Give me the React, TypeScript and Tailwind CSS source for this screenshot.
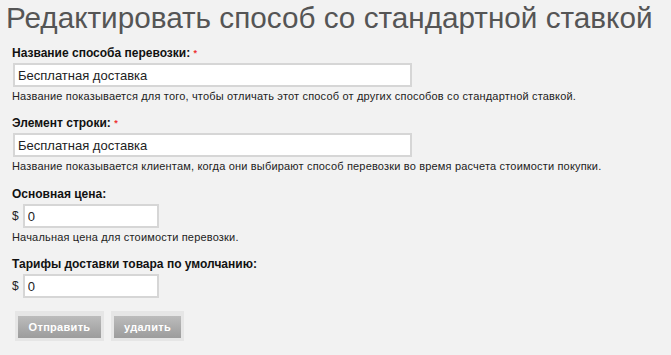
export default function App() {
  const label = "block text-[12px] font-bold leading-[14px] text-[#111]";
  const help = "text-[11px] leading-[13px] tracking-[0.18px] text-[#222]";
  const input =
    "h-[24px] border-2 border-[#d6d6d6] bg-white px-[3px] text-[13px] text-[#222] outline-none";

  return (
    <div className="min-h-screen bg-[#f2f2f2] pl-[12px] font-['Liberation_Sans',Arial,sans-serif]">
      <h1 className="-ml-[6px] pt-[1px] text-[29.7px] leading-[34px] font-normal text-[#555]">
        Редактировать способ со стандартной ставкой
      </h1>

      <div className="mt-[11px] flex flex-col">
        <label className={label}>
          Название способа перевозки: <span className="text-[#e33] text-[9px] align-top">*</span>
        </label>
        <input className={`${input} ml-[1px] mt-[3px] w-[399px]`} defaultValue="Бесплатная доставка" />
        <p className={`${help} mt-[3px]`}>
          Название показывается для того, чтобы отличать этот способ от других способов со стандартной ставкой.
        </p>

        <label className={`${label} mt-[13px]`}>
          Элемент строки: <span className="text-[#e33] text-[9px] align-top">*</span>
        </label>
        <input className={`${input} ml-[1px] mt-[3px] w-[399px]`} defaultValue="Бесплатная доставка" />
        <p className={`${help} mt-[3px]`}>
          Название показывается клиентам, когда они выбирают способ перевозки во время расчета стоимости покупки.
        </p>

        <label className={`${label} mt-[14px]`}>Основная цена:</label>
        <div className="mt-[3px] flex items-center gap-[4px]">
          <span className="text-[12px] text-[#222]">$</span>
          <input className={`${input} w-[136px]`} defaultValue="0" />
        </div>
        <p className={`${help} mt-[3px]`}>Начальная цена для стоимости перевозки.</p>

        <label className={`${label} mt-[13px]`}>Тарифы доставки товара по умолчанию:</label>
        <div className="mt-[3px] flex items-center gap-[4px]">
          <span className="text-[12px] text-[#222]">$</span>
          <input autoFocus className={`${input} w-[136px] caret-black`} defaultValue="0" />
        </div>

        <div className="mt-[13px] ml-[3px] flex gap-[7px]">
          <div className="bg-[#e6e6e6] p-[3px]">
            <button className="h-[22px] w-[83px] bg-gradient-to-b from-[#bcbcbc] to-[#9c9c9c] text-[11px] font-bold tracking-[0.3px] text-white">
              Отправить
            </button>
          </div>
          <div className="bg-[#e6e6e6] p-[3px]">
            <button className="h-[22px] w-[67px] bg-gradient-to-b from-[#bcbcbc] to-[#9c9c9c] text-[11px] font-bold tracking-[0.3px] text-white">
              удалить
            </button>
          </div>
        </div>
      </div>
    </div>
  );
}
